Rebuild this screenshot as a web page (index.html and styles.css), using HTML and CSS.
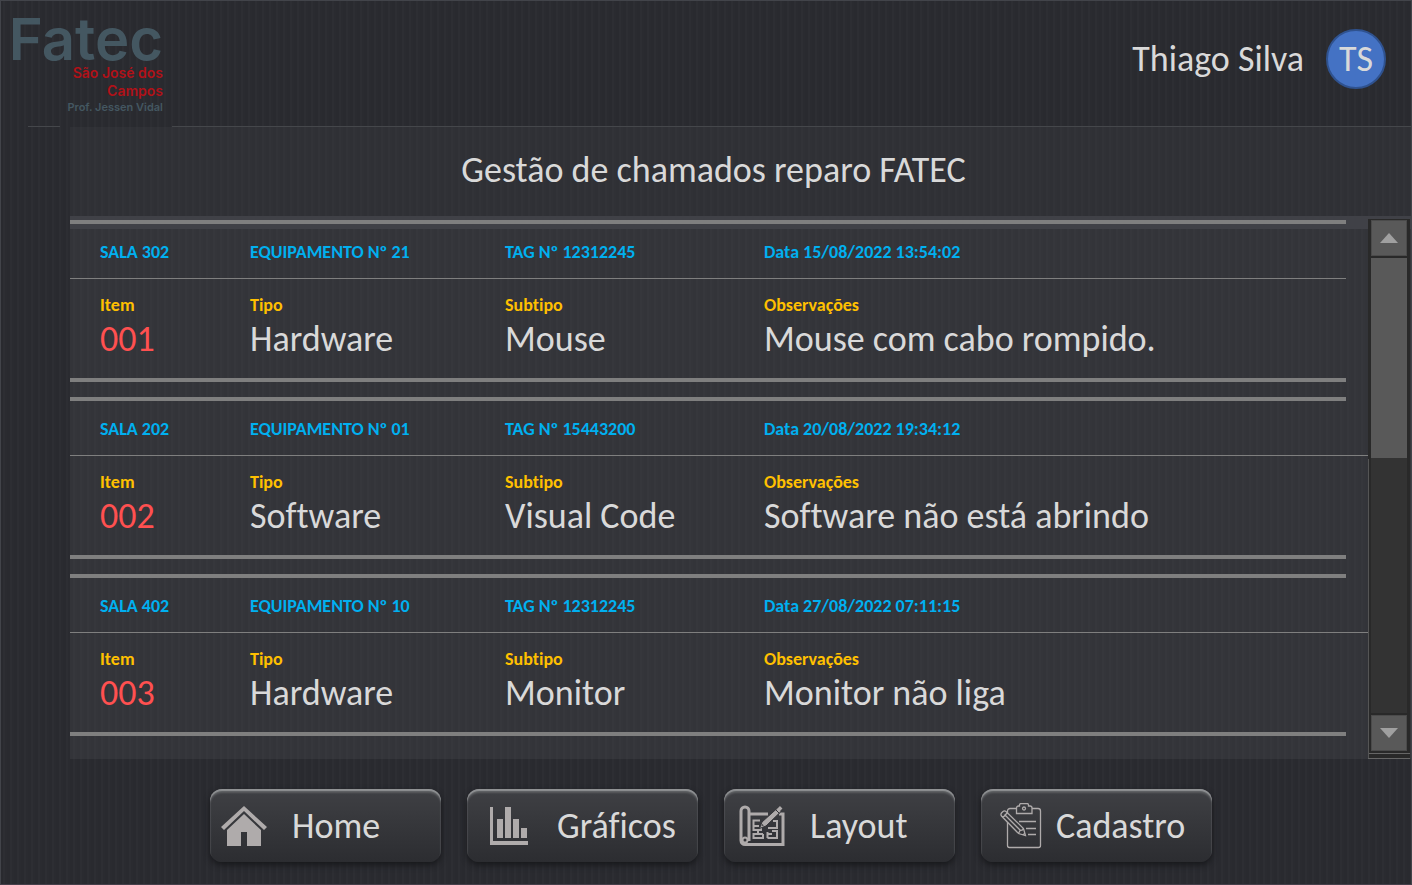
FILE: index.html
```html
<!DOCTYPE html>
<html lang="pt-BR">
<head>
<meta charset="utf-8">
<meta name="viewport" content="width=device-width, initial-scale=1">
<title>Gestão de chamados reparo FATEC</title>
<link rel="stylesheet" href="styles.css">
</head>
<body>
<header class="topbar">
  <div class="logo">
    <span class="logo-name">Fatec</span>
    <span class="logo-city">São José dos<br>Campos</span>
    <span class="logo-unit">Prof. Jessen Vidal</span>
  </div>
  <div class="user">
    <span class="user-name">Thiago Silva</span>
    <span class="avatar">TS</span>
  </div>
</header>

<main class="panel">
  <h1 class="title">Gestão de chamados reparo FATEC</h1>
  <div class="viewport">
    <section class="tickets">
      <article class="ticket">
        <div class="ticket-head columns">
          <span>SALA 302</span><span>EQUIPAMENTO Nº 21</span><span>TAG Nº 12312245</span><span>Data 15/08/2022 13:54:02</span>
        </div>
        <dl class="ticket-body columns">
          <div><dt>Item</dt><dd class="number">001</dd></div>
          <div><dt>Tipo</dt><dd>Hardware</dd></div>
          <div><dt>Subtipo</dt><dd>Mouse</dd></div>
          <div><dt>Observações</dt><dd>Mouse com cabo rompido.</dd></div>
        </dl>
      </article>
      <article class="ticket ticket-wide">
        <div class="ticket-head columns">
          <span>SALA 202</span><span>EQUIPAMENTO Nº 01</span><span>TAG Nº 15443200</span><span>Data 20/08/2022 19:34:12</span>
        </div>
        <dl class="ticket-body columns">
          <div><dt>Item</dt><dd class="number">002</dd></div>
          <div><dt>Tipo</dt><dd>Software</dd></div>
          <div><dt>Subtipo</dt><dd>Visual Code</dd></div>
          <div><dt>Observações</dt><dd>Software não está abrindo</dd></div>
        </dl>
      </article>
      <article class="ticket ticket-wide">
        <div class="ticket-head columns">
          <span>SALA 402</span><span>EQUIPAMENTO Nº 10</span><span>TAG Nº 12312245</span><span>Data 27/08/2022 07:11:15</span>
        </div>
        <dl class="ticket-body columns">
          <div><dt>Item</dt><dd class="number">003</dd></div>
          <div><dt>Tipo</dt><dd>Hardware</dd></div>
          <div><dt>Subtipo</dt><dd>Monitor</dd></div>
          <div><dt>Observações</dt><dd>Monitor não liga</dd></div>
        </dl>
      </article>
    </section>
    <div class="scrollbar">
      <button class="scroll-button" type="button" aria-label="Rolar para cima">
        <svg width="18" height="10" viewBox="0 0 18 10"><path d="M0 10 9 0l9 10z" fill="#a0a0a0"/></svg>
      </button>
      <div class="track"><div class="thumb"></div></div>
      <button class="scroll-button" type="button" aria-label="Rolar para baixo">
        <svg width="18" height="10" viewBox="0 0 18 10"><path d="M0 0h18L9 10z" fill="#a0a0a0"/></svg>
      </button>
    </div>
  </div>
</main>

<nav class="actions">
  <button class="action action-home" type="button">
    <svg width="46" height="40" viewBox="0 0 46 40" fill="#afabab">
      <path d="M0 21 23 0l23 21-3 3L23 5 3 24z"/>
      <path d="M23 8 40 24v16H26V26h-6v14H6V24z"/>
    </svg>
    <span>Home</span>
  </button>
  <button class="action action-charts" type="button">
    <svg width="40" height="40" viewBox="0 0 40 40" fill="#afabab">
      <path d="M1 1h3v34h35v4H1z"/>
      <path d="M8 13h6v19H8zM16 1h6v31h-6zM24 13h6v19h-6zM32 22h6v10h-6z"/>
    </svg>
    <span>Gráficos</span>
  </button>
  <button class="action action-layout" type="button">
    <svg width="46" height="42" viewBox="0 0 46 42" fill="none" stroke="#afabab">
      <path d="M10 9h19M40 9h4v30.500H6a4 4 0 0 1-4-4V6a4 4 0 0 1 8 0v30" stroke-width="3"/>
      <circle cx="6" cy="35" r="2.500" stroke-width="2"/>
      <path d="M21 15.500h-6.500V21H20M14.500 21v4H22v-3M19 25v4M24 29h-9.500v4H24v-4M34 16h4v7H29M28.500 33h9.500v-7h-5M28.500 27v6M33 29h-4" stroke-width="2"/>
      <path d="M38.500 3 23 17 20.500 23.500 27 21 42 6.500z" fill="#afabab" stroke="#343539" stroke-width="1"/>
      <path d="M36.500 4.500 40.500 8.500" stroke="#343539" stroke-width="1"/>
      <path d="m39.500 2.500 2.500 2.500" stroke-width="4"/>
      <path d="m22.500 21 .8-2 1.500 1.500z" fill="#343539" stroke="none"/>
    </svg>
    <span>Layout</span>
  </button>
  <button class="action action-form" type="button">
    <svg width="42" height="46" viewBox="0 0 42 46" fill="none" stroke="#afabab" stroke-width="1.300">
      <path d="M17 5.500H10a2.500 2.500 0 0 0-2.500 2.500v2.500M7.500 19v23.500a2 2 0 0 0 2 2h29a2 2 0 0 0 2-2V8a2.500 2.500 0 0 0-2.500-2.500h-6"/>
      <path d="M16.500 10.500V5a2 2 0 0 1 2-2h1V2a1.500 1.500 0 0 1 1.500-1.500h6A1.500 1.500 0 0 1 28.500 2v1h1.500a2 2 0 0 1 2 2v5.500z"/>
      <circle cx="24" cy="5.500" r="1.500"/>
      <path d="M19 18.500h17M26 25.500h10M28 31.500h8"/>
      <path d="M1.500 13a2.500 2.500 0 0 1 0-3l1.500-1.500a2.500 2.500 0 0 1 3 0L23.500 25.500 25.500 32.500 18.500 30.500zM3 14.500 7 10M18.500 30.500l1.500-3 2.500-.5 1-2M4.500 11.500 20.500 27.500M23 32l2-2"/>
    </svg>
    <span>Cadastro</span>
  </button>
</nav>
</body>
</html>
```
FILE: styles.css
```css
* {
  box-sizing: border-box;
}

body {
  display: flex;
  flex-direction: column;
  min-height: 100vh;
  margin: 0;
  border: 1px solid #42444a;
  border-bottom-color: #453f4a;
  background: repeating-linear-gradient(90deg, #292a2f 0 3px, #2d2e33 3px 5px, #2a2b30 5px 7px);
  color: #d9d9d9;
  font: 36px/40px Carlito, Calibri, "Open Sans", sans-serif;
  font-variant-ligatures: none;
}

button {
  padding: 0;
  border: 0;
  color: inherit;
  font: inherit;
  font-variant-ligatures: none;
}

.topbar {
  display: flex;
  justify-content: space-between;
  align-items: flex-start;
  height: 126px;
  padding: 10px 25px 0 10px;
  background: linear-gradient(90deg, transparent 27px, #45474b 27px 59px, transparent 59px 171px, #45474b 171px) bottom / 100% 1px no-repeat;
}

.logo {
  display: flex;
  flex-direction: column;
  align-items: flex-end;
  width: 152px;
  font-family: Inter, sans-serif;
  font-weight: 600;
  text-align: right;
}

.logo-name {
  color: #445761;
  font-size: 58px;
  line-height: 56px;
}

.logo-city {
  margin-top: -3px;
  color: #b11118;
  font-size: 14px;
  line-height: 18px;
}

.logo-unit {
  color: #445761;
  font-size: 11px;
  line-height: 15px;
}

.user {
  display: flex;
  align-items: center;
  gap: 22px;
  margin-top: 18px;
}

.avatar {
  width: 60px;
  height: 60px;
  border: 2px solid #2f528f;
  border-radius: 50%;
  background: #4472c4;
  line-height: 56px;
  text-align: center;
}

.panel {
  flex: 1;
  display: flex;
  flex-direction: column;
  margin-left: 69px;
  background: repeating-linear-gradient(90deg, #333439 0 3px, #36373c 3px 5px, #34353a 5px 7px);
}

.title {
  margin: 0;
  padding: 23px 54px 26px 0;
  background: repeating-linear-gradient(90deg, #2f3035 0 3px, #323338 3px 5px, #303136 5px 7px);
  font-size: 36px;
  font-weight: 400;
  line-height: 40px;
  text-align: center;
}

.viewport {
  flex: 1;
  display: flex;
  background: linear-gradient(#404147, #404147) top / 100% 13px no-repeat;
}

.tickets {
  flex: 1;
  display: flex;
  flex-direction: column;
  gap: 15px;
  padding: 4px 22px 23px 0;
}

.ticket {
  border: solid #7f7f7f;
  border-width: 4px 0;
}

.columns {
  display: grid;
  grid-template-columns: 150fr 255fr 259fr 582fr;
  padding-left: 30px;
}

.ticket-head {
  padding-top: 18px;
  padding-bottom: 16px;
  border-bottom: 1px solid #7f7f7f;
  color: #00b0f0;
  font-size: 18px;
  font-weight: 700;
  line-height: 20px;
}

.ticket-wide .ticket-head {
  margin-right: -22px;
  padding-right: 22px;
}

.ticket-body {
  margin: 0;
  padding-top: 16px;
  padding-bottom: 19px;
}

dt {
  margin-bottom: 4px;
  color: #ffc000;
  font-size: 18px;
  font-weight: 700;
  line-height: 20px;
}

dd {
  margin: 0;
}

.number {
  color: #ff5050;
}

.scrollbar {
  display: flex;
  flex-direction: column;
  gap: 2px;
  width: 42px;
  margin: 3px 1px 0 0;
  padding: 1px 3px 7px;
  border-bottom: 1px solid #666;
  background: linear-gradient(#555, #555) 0 100% / 1px 299px no-repeat, linear-gradient(#666, #666) 0 calc(100% - 4px) / 100% 1px no-repeat, #292929;
}

.scroll-button {
  display: flex;
  align-items: center;
  justify-content: center;
  height: 36px;
  border: 1px solid #4b4b4b;
  background: #595959;
}

.track {
  flex: 1;
  background: #333;
}

.thumb {
  height: 44%;
  background: #595959;
}

.actions {
  display: flex;
  justify-content: center;
  gap: 26px;
  padding: 30px 0 22px 10px;
}

.action {
  display: flex;
  align-items: center;
  width: 231px;
  height: 73px;
  border-radius: 12px;
  background: linear-gradient(#3f4044, #2c2d31);
  box-shadow: inset 0 2px 1px #909294, inset 0 4px 2px #5b5d60, 0 3px 6px #17181b;
}

.action-home {
  gap: 25px;
  padding-left: 11px;
}

.action-charts {
  gap: 28px;
  padding-left: 22px;
}

.action-layout {
  gap: 25px;
  padding-left: 15px;
}

.action-form {
  gap: 14px;
  padding-left: 19px;
}
```
